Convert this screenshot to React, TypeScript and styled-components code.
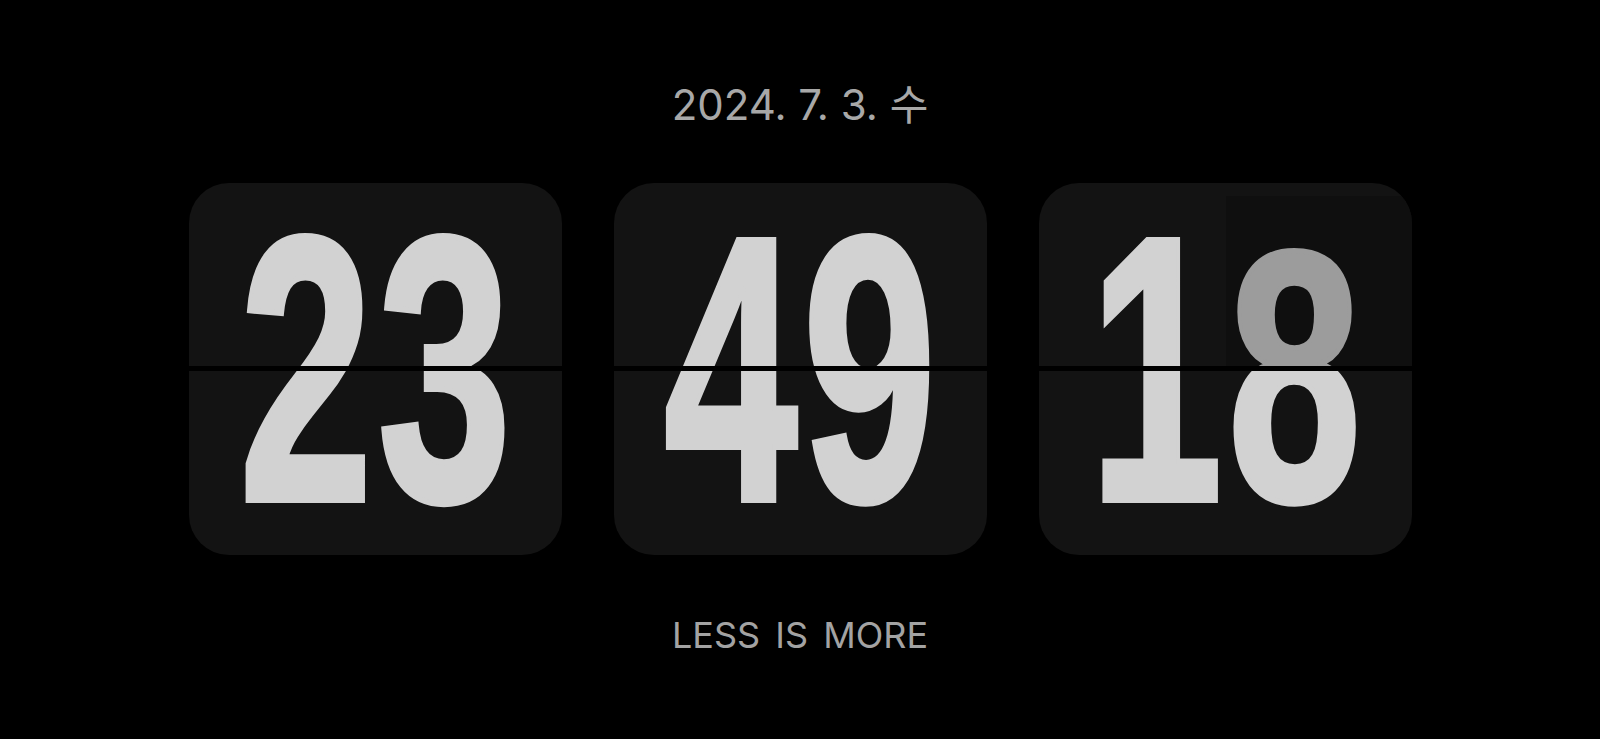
import React from 'react';
import styled, { createGlobalStyle } from 'styled-components';

const GlobalStyle = createGlobalStyle`
    html, body {
        margin: 0;
        padding: 0;
        background: #000;
    }
`;

interface IUnit {
    value: string;
    flap?: string;
}

const units: IUnit[] = [
    { value: '23' },
    { value: '49' },
    { value: '18', flap: '18' },
];

const CARD_W = 373;
const CARD_H = 372;
const FLAP_LEFT = 187;
const FLAP_TOP = 13;

export default function App() {
    return (
        <Page>
            <GlobalStyle />
            <DateLine>2024. 7. 3. 수</DateLine>
            <Cards>
                {units.map((u, i) => (
                    <Card key={i}>
                        <Digits>{u.value}</Digits>
                        {u.flap && (
                            <Flap>
                                <FlapInner>
                                    <Digits $dim>{u.flap}</Digits>
                                </FlapInner>
                            </Flap>
                        )}
                        <Split />
                    </Card>
                ))}
            </Cards>
            <Motto>LESS IS MORE</Motto>
        </Page>
    );
}

const Page = styled.div`
    height: 739px;
    display: flex;
    flex-direction: column;
    align-items: center;
    background: #000;
    overflow: hidden;
`;

const DateLine = styled.div`
    margin-top: 80px;
    height: 50px;
    line-height: 50px;
    font-family: Inter, "Noto Sans CJK KR", sans-serif;
    font-size: 42px;
    color: #a8a8a8;
    white-space: pre;
`;

const Cards = styled.div`
    margin-top: 53px;
    display: flex;
    gap: 52px;
`;

const Card = styled.div`
    position: relative;
    width: ${CARD_W}px;
    height: ${CARD_H}px;
    border-radius: 40px;
    background: #131313;
    overflow: hidden;
    display: flex;
    align-items: center;
    justify-content: center;
`;

const Digits = styled.span<{ $dim?: boolean }>`
    display: inline-block;
    padding-left: 8px;
    font-family: "Liberation Sans Narrow", "Liberation Sans", sans-serif;
    font-weight: 700;
    font-size: 378px;
    line-height: 1;
    letter-spacing: 8px;
    color: ${p => (p.$dim ? '#9c9c9c' : '#d2d2d2')};
    -webkit-text-stroke: 6px ${p => (p.$dim ? '#9c9c9c' : '#d2d2d2')};
    transform: scaleX(0.635);
    white-space: nowrap;
`;

const Flap = styled.div`
    position: absolute;
    left: ${FLAP_LEFT}px;
    top: ${FLAP_TOP}px;
    right: 0;
    height: ${CARD_H / 2 - FLAP_TOP}px;
    background: #0f0f0f;
    overflow: hidden;
`;

const FlapInner = styled.div`
    position: absolute;
    left: -${FLAP_LEFT}px;
    top: -${FLAP_TOP}px;
    width: ${CARD_W}px;
    height: ${CARD_H}px;
    display: flex;
    align-items: center;
    justify-content: center;
    transform: scaleY(0.89);
    transform-origin: center center;
`;

const Split = styled.div`
    position: absolute;
    left: 0;
    right: 0;
    top: ${CARD_H / 2 - 3}px;
    height: 5px;
    background: #000;
`;

const Motto = styled.div`
    margin-top: 58px;
    height: 44px;
    line-height: 44px;
    font-family: Inter, sans-serif;
    font-size: 36px;
    color: #a3a3a3;
    word-spacing: 5px;
`;
